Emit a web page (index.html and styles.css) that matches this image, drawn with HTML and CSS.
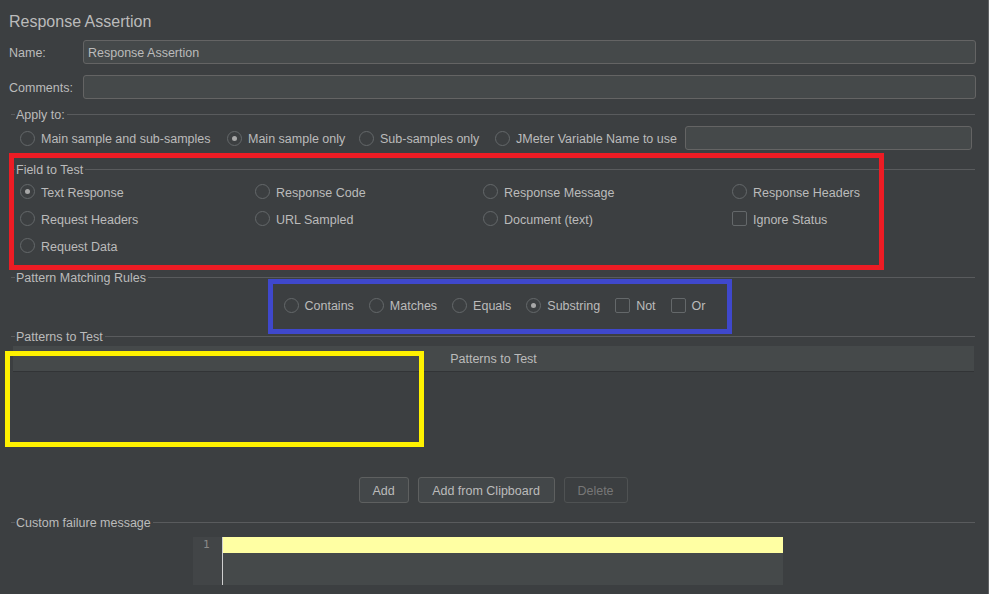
FILE: index.html
```html
<!DOCTYPE html>
<html>
<head>
<meta charset="utf-8">
<title>Response Assertion</title>
<link rel="stylesheet" href="styles.css">
</head>
<body>
<div class="panel">
  <div class="title">Response Assertion</div>
  <div class="form-row name-row"><span class="lbl">Name:</span><div class="input">Response Assertion</div></div>
  <div class="form-row comments-row"><span class="lbl">Comments:</span><div class="input"></div></div>

  <div class="section">
    <div class="legend apply-legend"><span>Apply to:</span></div>
    <div class="apply-row">
      <div class="opt a1"><span class="radio"></span>Main sample and sub-samples</div>
      <div class="opt a2"><span class="radio on"></span>Main sample only</div>
      <div class="opt a3"><span class="radio"></span>Sub-samples only</div>
      <div class="opt a4"><span class="radio"></span>JMeter Variable Name to use</div>
      <div class="input var-input"></div>
    </div>

    <div class="legend field-legend"><span>Field to Test</span></div>
    <div class="field-grid">
      <div class="opt"><span class="radio on"></span>Text Response</div>
      <div class="opt"><span class="radio"></span>Response Code</div>
      <div class="opt"><span class="radio"></span>Response Message</div>
      <div class="opt"><span class="radio"></span>Response Headers</div>
      <div class="opt"><span class="radio"></span>Request Headers</div>
      <div class="opt"><span class="radio"></span>URL Sampled</div>
      <div class="opt"><span class="radio"></span>Document (text)</div>
      <div class="opt"><span class="check"></span>Ignore Status</div>
      <div class="opt"><span class="radio"></span>Request Data</div>
    </div>

    <div class="legend pattern-legend"><span>Pattern Matching Rules</span></div>
    <div class="pattern-row">
      <div class="opt"><span class="radio"></span>Contains</div>
      <div class="opt"><span class="radio"></span>Matches</div>
      <div class="opt"><span class="radio"></span>Equals</div>
      <div class="opt"><span class="radio on"></span>Substring</div>
      <div class="opt"><span class="check"></span>Not</div>
      <div class="opt"><span class="check"></span>Or</div>
    </div>

    <div class="legend patterns-legend"><span>Patterns to Test</span></div>
    <div class="table">
      <div class="thead">Patterns to Test</div>
      <div class="tbody"></div>
    </div>
    <div class="buttons">
      <div class="btn b-add">Add</div>
      <div class="btn b-clip">Add from Clipboard</div>
      <div class="btn b-del disabled">Delete</div>
    </div>

    <div class="legend custom-legend"><span>Custom failure message</span></div>
    <div class="editor-wrap">
      <div class="editor">
        <div class="gutter">1</div>
        <div class="text-area"><div class="cur-line"></div></div>
      </div>
    </div>
  </div>
</div>

<div class="mark mark-red"></div>
<div class="mark mark-blue"></div>
<div class="mark mark-yellow"></div>
</body>
</html>
```
FILE: styles.css
```css
* { box-sizing: border-box; }
html, body { margin: 0; padding: 0; }
body {
  width: 989px;
  height: 594px;
  overflow: hidden;
  position: relative;
  background: #3c3f41;
  color: #bbbbbb;
  font-family: "Liberation Sans", Arial, sans-serif;
  font-size: 12.5px;
}
.panel {
  width: 989px;
  height: 594px;
  padding: 12px 12px 0 9px;
  border-right: 1px solid #5f6163;
}
.title { font-size: 16px; line-height: 20px; height: 20px; }
.form-row { display: flex; align-items: center; height: 24px; }
.name-row { margin-top: 8px; }
.comments-row { margin-top: 11px; }
.lbl { width: 74px; padding-top: 2px; }
.input {
  flex: 1;
  height: 24px;
  background: #45494a;
  border: 1px solid #646464;
  border-radius: 3px;
  padding: 1px 0 0 4px;
  line-height: 22px;
}
.section { margin-left: 2px; margin-right: 1px; }
.legend { display: flex; align-items: center; height: 14px; line-height: 14px; }
.legend span { padding-top: 2px; }
.legend::before { content: ""; width: 4px; height: 1px; background: #595b5d; margin-right: 1px; }
.legend::after { content: ""; flex: 1; height: 1px; background: #595b5d; margin-left: 2px; }
.apply-legend { margin-top: 8px; }
.field-legend { margin-top: 12px; }
.pattern-legend { margin-top: 11px; }
.patterns-legend { margin-top: 12px; }
.custom-legend { margin-top: 12px; }

.opt { display: flex; align-items: center; white-space: nowrap; padding-top: 2px; }
.radio {
  width: 15px; height: 15px;
  border-radius: 50%;
  border: 1px solid #64686a;
  margin: -2px 6px 0 0;
  display: flex; align-items: center; justify-content: center;
  flex: none;
}
.radio.on::after { content: ""; width: 5px; height: 5px; border-radius: 50%; background: #a8a8a8; }
.check {
  width: 15px; height: 15px;
  border: 1px solid #64686a;
  border-radius: 2px;
  margin: -2px 6px 0 0;
  flex: none;
}

.apply-row { display: flex; align-items: stretch; height: 24px; margin-top: 5px; padding-left: 9px; }
.a1 { width: 207px; }
.a2 { width: 132px; }
.a3 { width: 136px; }
.a4 { width: 190px; }
.var-input { flex: none; width: 287px; }

.field-grid {
  display: grid;
  grid-template-columns: 235px 228px 249px 1fr;
  grid-auto-rows: 27px;
  margin-top: 2px;
  padding-left: 9px;
}

.pattern-row { display: flex; justify-content: center; align-items: stretch; gap: 15px; height: 24px; margin-top: 9px; padding-left: 3px; }

.table { margin-top: 3px; padding: 0 1px 0 2px; }
.thead {
  height: 26px;
  line-height: 25px;
  padding-top: 1px;
  text-align: center;
  background: #45494a;
  border-bottom: 1px solid #323436;
}
.tbody { height: 105px; }

.buttons { display: flex; justify-content: center; gap: 9px; height: 26px; }
.btn {
  height: 26px;
  line-height: 24px;
  padding-top: 1px;
  text-align: center;
  border: 1px solid #5e6060;
  border-radius: 3px;
  background: #434749;
}
.b-add { width: 50px; }
.b-clip { width: 137px; }
.b-del { width: 64px; }
.btn.disabled { background: #3c3f41; border-color: #4f5253; color: #777777; }

.editor-wrap { margin-top: 8px; padding-left: 182px; }
.editor { display: flex; width: 590px; height: 48px; }
.gutter {
  width: 29px;
  background: #424547;
  color: #8a8a8a;
  font-family: "DejaVu Sans Mono", "Liberation Mono", monospace;
  font-size: 11px;
  line-height: 14px;
  padding: 1px 0 0 10px;
}
.text-area { flex: 1; background: #45494a; border-left: 1px solid #cfcfcf; }
.cur-line { height: 16px; background: #ffffa3; }

.mark { position: absolute; border-style: solid; border-width: 5px; pointer-events: none; }
.mark-red { left: 9px; top: 153px; width: 875px; height: 117px; border-color: #ed1c24; }
.mark-blue { left: 268px; top: 279px; width: 464px; height: 55px; border-color: #3f48cc; }
.mark-yellow { left: 5px; top: 351px; width: 419px; height: 96px; border-color: #fff200; }
```
